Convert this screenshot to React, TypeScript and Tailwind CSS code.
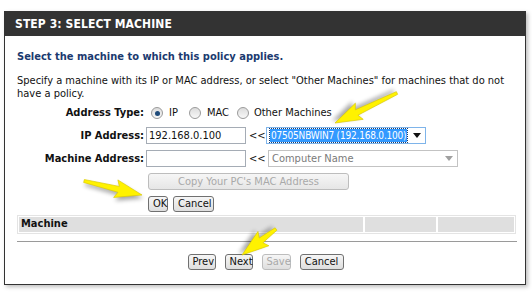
import React from "react";

const font = { fontFamily: '"DejaVu Sans Condensed", "Liberation Sans", sans-serif' };

function Btn({ children, disabled, className = "" }: { children: React.ReactNode; disabled?: boolean; className?: string }) {
  return (
    <button
      className={
        "h-[16px] rounded-[3px] border px-[4px] text-[11px] leading-[14px] bg-gradient-to-b from-[#f6f6f6] to-[#dedede] " +
        (disabled ? "border-[#bdbdbd] text-[#a9a9a9]" : "border-[#707070] text-[#111]") +
        " " +
        className
      }
    >
      {children}
    </button>
  );
}

function Radio({ checked }: { checked?: boolean }) {
  return (
    <span className="flex h-[12px] w-[12px] items-center justify-center rounded-full border border-[#9a9a9a] bg-gradient-to-b from-[#dcdcdc] to-[#f8f8f8]">
      {checked && <span className="h-[5px] w-[5px] rounded-full bg-[#1f4b7a]" />}
    </span>
  );
}

function Arrow({ x, y, tx, ty }: { x: number; y: number; tx: number; ty: number }) {
  const dx = tx - x;
  const dy = ty - y;
  const L = Math.sqrt(dx * dx + dy * dy);
  const a = (Math.atan2(dy, dx) * 180) / Math.PI;
  const h = 24;
  const pts = `0,-1.5 ${L - h},-3 ${L - h - 3},-9 ${L},0 ${L - h - 3},9 ${L - h},3 0,1.5`;
  return (
    <g transform={`translate(${x} ${y}) rotate(${a})`}>
      <polygon points={pts} fill="#000" opacity="0.35" transform="translate(2 3)" filter="url(#blur)" />
      <polygon points={pts} fill="#fff200" stroke="#d8c800" strokeWidth="0.6" />
    </g>
  );
}

export default function App() {
  return (
    <div className="relative h-[303px] w-[532px] overflow-hidden bg-white" style={font}>
      <div className="ml-[4px] mt-[11px] flex h-[274px] w-[522px] flex-col border border-[#333] shadow-[2px_2px_4px_rgba(0,0,0,0.25)]">
        <div className="flex h-[24px] shrink-0 items-center bg-[#333] pl-[10px] text-[12px] font-bold tracking-[0.1px] text-white">
          STEP 3: SELECT MACHINE
        </div>
        <div className="flex flex-col px-[12px]">
          <p className="mt-[14px] text-[11px] font-bold leading-[14px] text-[#1b3a6f]">
            Select the machine to which this policy applies.
          </p>
          <p className="mt-[10px] text-[11px] leading-[13px] text-[#111]">
            Specify a machine with its IP or MAC address, or select "Other Machines" for machines that do not have a policy.
          </p>

          <div className="mt-[5px] grid grid-cols-[129px_1fr] grid-rows-[16px_17px_17px_17px_16px] items-center gap-y-[6px] text-[11px] leading-[16px] text-[#111]">
            <div className="pr-[2px] text-right font-bold">Address Type:</div>
            <div className="flex h-[16px] items-center">
              <span className="ml-[5px]"><Radio checked /></span>
              <span className="ml-[6px]">IP</span>
              <span className="ml-[11px]"><Radio /></span>
              <span className="ml-[6px]">MAC</span>
              <span className="ml-[8px]"><Radio /></span>
              <span className="ml-[5px]">Other Machines</span>
            </div>

            <div className="pr-[2px] text-right font-bold">IP Address:</div>
            <div className="flex h-[17px] items-center">
              <div className="flex h-[17px] w-[100px] items-center border border-[#a5acb5] bg-white px-[2px]">192.168.0.100</div>
              <span className="ml-[3px] w-[17px]">&lt;&lt;</span>
              <div className="flex h-[17px] w-[160px] items-center border border-[#7eb4ea] bg-white pl-[3px] pr-[4px]">
                <span className="whitespace-nowrap bg-[#3399ff] px-[1px] text-[10px] leading-[13px] tracking-[-0.2px] text-white outline-1 outline-dotted outline-[#1a3b6a]">07505NBWIN7 (192.168.0.100)</span>
                <svg className="ml-auto shrink-0" width="8" height="5" viewBox="0 0 8 5"><path d="M0 0h8L4 5z" fill="#111" /></svg>
              </div>
            </div>

            <div className="pr-[2px] text-right font-bold">Machine Address:</div>
            <div className="flex h-[17px] items-center">
              <div className="h-[17px] w-[100px] border border-[#a5acb5] bg-white" />
              <span className="ml-[3px] w-[19px]">&lt;&lt;</span>
              <div className="flex h-[17px] w-[190px] items-center border border-[#c3c3c3] bg-white pl-[3px] pr-[4px] text-[#7a7a7a]">
                Computer Name
                <svg className="ml-auto" width="8" height="5" viewBox="0 0 8 5"><path d="M0 0h8L4 5z" fill="#a0a0a0" /></svg>
              </div>
            </div>

            <div />
            <div className="flex">
              <button className="ml-[2px] h-[17px] w-[201px] rounded-[3px] border border-[#bdbdbd] bg-gradient-to-b from-[#f6f6f6] to-[#e6e6e6] text-[11px] leading-[15px] text-[#a9a9a9]">
                Copy Your PC's MAC Address
              </button>
            </div>

            <div />
            <div className="flex gap-[5px]">
              <Btn className="ml-[2px] w-[20px] px-0">OK</Btn>
              <Btn className="w-[41px] px-0">Cancel</Btn>
            </div>
          </div>

          <div className="mt-[3px] flex w-[499px] gap-[2px] border border-[#e4e4e4] bg-white p-[1px]">
            <div className="flex h-[15px] w-[344px] items-center bg-[#dfdfdf] pl-[2px] text-[11px] font-bold text-[#111]">Machine</div>
            <div className="h-[15px] w-[71px] bg-[#dfdfdf]" />
            <div className="h-[15px] flex-1 bg-[#dfdfdf]" />
          </div>

          <div className="mt-[7px] h-0 w-[500px] border-t border-[#9a9a9a]" />

          <div className="mt-[12px] flex w-[497px] justify-center gap-[9px]">
            <Btn className="h-[15px] w-[28px] px-0">Prev</Btn>
            <Btn className="h-[15px] w-[28px] px-0">Next</Btn>
            <Btn disabled className="h-[15px] w-[29px] px-0">Save</Btn>
            <Btn className="h-[15px] w-[44px] px-0">Cancel</Btn>
          </div>
        </div>
      </div>

      <svg className="pointer-events-none absolute inset-0" width="532" height="303">
        <defs>
          <filter id="blur" x="-20%" y="-50%" width="140%" height="200%">
            <feGaussianBlur stdDeviation="2" />
          </filter>
        </defs>
        <Arrow x={397} y={93} tx={335} ty={123} />
        <Arrow x={84} y={181} tx={142} ty={195} />
        <Arrow x={276} y={229} tx={242} ty={255} />
      </svg>
    </div>
  );
}
